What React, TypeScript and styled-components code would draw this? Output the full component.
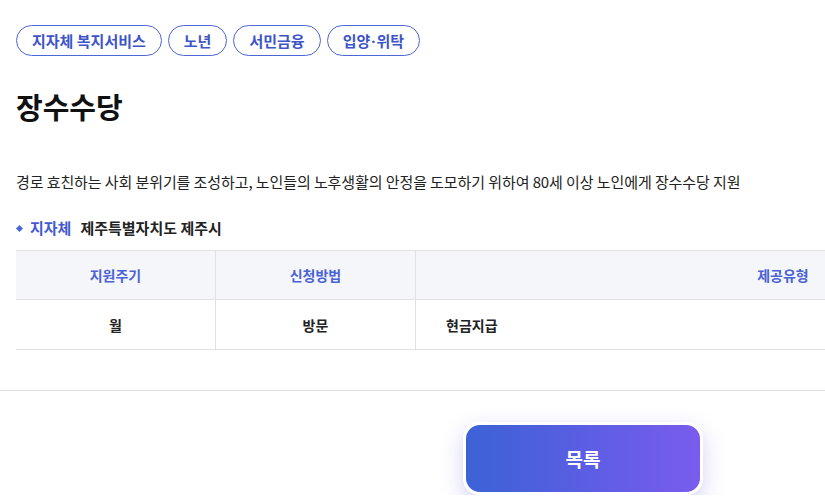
import React from 'react';
import styled, { createGlobalStyle } from 'styled-components';

const GlobalStyle = createGlobalStyle`
  html, body {
    margin: 0;
    padding: 0;
    background: #ffffff;
    overflow: hidden;
  }
  body {
    font-family: "Noto Sans CJK KR", "Noto Sans", sans-serif;
    color: #222222;
  }
`;

const Page = styled.div`
  width: 1166px;
  box-sizing: border-box;
`;

const Section = styled.section`
  padding: 25px 16px 0;
`;

const TagList = styled.div`
  display: flex;
  gap: 6px;
`;

const Tag = styled.span`
  display: inline-flex;
  align-items: center;
  height: 31px;
  box-sizing: border-box;
  padding: 0 15px;
  border: 1px solid #4d66d8;
  border-radius: 16px;
  color: #3d55c9;
  font-size: 15px;
  font-weight: 700;
`;

const Dot = styled.span`
  font-family: "Noto Sans", sans-serif;
  margin: 0 1px;
`;

const Title = styled.h1`
  margin: 30px 0 0;
  font-size: 29px;
  font-weight: 700;
  color: #111111;
  line-height: 40px;
`;

const Description = styled.p`
  margin: 45px 0 0;
  font-size: 15px;
  line-height: 22px;
  color: #222222;
  letter-spacing: -0.09px;
`;

const Region = styled.div`
  display: flex;
  align-items: center;
  margin-top: 25px;
  font-size: 15px;
  font-weight: 700;
  line-height: 20px;
`;

const Bullet = styled.span`
  width: 5px;
  height: 5px;
  background: #4d66d8;
  transform: rotate(45deg);
  margin: 0 8px 0 1px;
`;

const RegionLabel = styled.span`
  color: #4359d2;
  margin-right: 9px;
`;

const RegionValue = styled.span`
  color: #222222;
`;

const Table = styled.div`
  margin-top: 12px;
  display: grid;
  grid-template-columns: 200px 200px 1fr;
  border-top: 1px solid #e1e1e4;
  border-bottom: 1px solid #e1e1e4;
`;

const HeadCell = styled.div<{ $last?: boolean }>`
  height: 48px;
  display: flex;
  align-items: center;
  justify-content: center;
  background: #f5f6fa;
  border-bottom: 1px solid #e1e1e4;
  border-right: ${({ $last }) => ($last ? 'none' : '1px solid #e1e1e4')};
  color: #4a62d6;
  font-size: 14px;
  font-weight: 700;
`;

const BodyCell = styled.div<{ $left?: boolean; $last?: boolean }>`
  height: 49px;
  display: flex;
  align-items: center;
  justify-content: ${({ $left }) => ($left ? 'flex-start' : 'center')};
  padding-left: ${({ $left }) => ($left ? '30px' : '0')};
  border-right: ${({ $last }) => ($last ? 'none' : '1px solid #e1e1e4')};
  color: #222222;
  font-size: 14px;
  font-weight: 700;
`;

const Divider = styled.hr`
  margin: 40px 0 0;
  border: none;
  border-top: 1px solid #e1e1e4;
`;

const Footer = styled.div`
  display: flex;
  justify-content: center;
  padding-top: 31px;
`;

const ListButton = styled.button`
  width: 240px;
  height: 73px;
  border: 3px solid #ffffff;
  border-radius: 17px;
  background: linear-gradient(90deg, #3c62d6 0%, #5a5ee2 50%, #7a5ced 100%);
  box-shadow: 0 8px 22px rgba(96, 88, 214, 0.28);
  color: #ffffff;
  font-family: "Noto Sans CJK KR", "Noto Sans", sans-serif;
  font-size: 19px;
  font-weight: 700;
  cursor: pointer;
`;

const App: React.FC = () => {
  return (
    <Page>
      <GlobalStyle />
      <Section>
        <TagList>
          <Tag>지자체 복지서비스</Tag>
          <Tag>노년</Tag>
          <Tag>서민금융</Tag>
          <Tag>
            입양<Dot>·</Dot>위탁
          </Tag>
        </TagList>
        <Title>장수수당</Title>
        <Description>
          경로 효친하는 사회 분위기를 조성하고, 노인들의 노후생활의 안정을 도모하기 위하여 80세 이상 노인에게 장수수당 지원
        </Description>
        <Region>
          <Bullet />
          <RegionLabel>지자체</RegionLabel>
          <RegionValue>제주특별자치도 제주시</RegionValue>
        </Region>
        <Table>
          <HeadCell>지원주기</HeadCell>
          <HeadCell>신청방법</HeadCell>
          <HeadCell $last>제공유형</HeadCell>
          <BodyCell>월</BodyCell>
          <BodyCell>방문</BodyCell>
          <BodyCell $left $last>현금지급</BodyCell>
        </Table>
      </Section>
      <Divider />
      <Footer>
        <ListButton>목록</ListButton>
      </Footer>
    </Page>
  );
};

export default App;
